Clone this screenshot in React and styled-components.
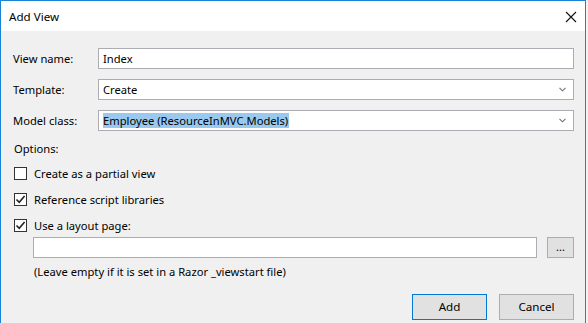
import React from "react";
import styled, { createGlobalStyle } from "styled-components";

const Global = createGlobalStyle`
  html, body { margin: 0; padding: 0; background: #f3f3f3; }
  body { font-family: "Noto Sans", "Liberation Sans", sans-serif; font-size: 11.2px; color: #000; }
  * { box-sizing: border-box; }
`;

const Window = styled.div`
  width: 586px;
  height: 323px;
  overflow: hidden;
  border: 1px solid #1883d7;
  border-bottom: none;
  background: #f0f0f0;
  display: flex;
  flex-direction: column;
`;

const TitleBar = styled.div`
  height: 30px;
  flex: none;
  background: #fff;
  display: flex;
  align-items: center;
  justify-content: space-between;
  padding: 0 9px 0 8px;
`;

const Title = styled.span`
  font-size: 11.6px;
  line-height: 16px;
  margin-top: 1px;
`;

const CloseBtn = styled.div`
  width: 12px;
  height: 12px;
  display: flex;
  margin-right: -1px;
  margin-top: 1px;
`;

const Body = styled.div`
  padding: 17px 11px 0 12px;
  display: flex;
  flex-direction: column;
`;

const FieldRow = styled.div`
  display: grid;
  grid-template-columns: 85px 476px;
  align-items: center;
  height: 21px;
  margin-bottom: 10px;
`;

const Label = styled.label`
  line-height: 16px;
`;

const TextBox = styled.div`
  height: 21px;
  background: #fff;
  border: 1px solid #abadb3;
  padding: 0 4px;
  display: flex;
  align-items: center;
  line-height: 16px;
  width: ${p => (p.$w ? p.$w + "px" : "auto")};
`;

const Combo = styled(TextBox)`
  justify-content: space-between;
  padding-right: 7px;
`;

const Selected = styled.span`
  background: #99c9ef;
  line-height: 15px;
  padding-right: 1px;
`;

const SectionLabel = styled.div`
  line-height: 16px;
  margin: 0 0 10px 1px;
`;

const CheckRow = styled.div`
  display: flex;
  align-items: center;
  gap: 7px;
  height: 13px;
  margin: 0 0 13px 1px;
`;

const Box = styled.div`
  width: 13px;
  height: 13px;
  border: 1px solid #333;
  background: #fff;
  display: flex;
  align-items: center;
  justify-content: center;
  flex: none;
`;

const CheckText = styled.span`
  line-height: 16px;
`;

const PathRow = styled.div`
  display: flex;
  gap: 10px;
  margin: -8px 0 0 20px;
  height: 21px;
`;

const SmallButton = styled.div`
  width: 27px;
  height: 21px;
  border: 1px solid #adadad;
  background: #e1e1e1;
  display: flex;
  align-items: center;
  justify-content: center;
  font-size: 11px;
  line-height: 12px;
  padding-bottom: 2px;
`;

const Hint = styled.div`
  margin: 6px 0 0 21px;
  line-height: 16px;
`;

const Footer = styled.div`
  display: flex;
  justify-content: flex-end;
  gap: 12px;
  margin-top: 14px;
`;

const Button = styled.div`
  width: 75px;
  height: 26px;
  background: #e1e1e1;
  border: 1px solid ${p => (p.$primary ? "#0078d7" : "#adadad")};
  display: flex;
  align-items: center;
  justify-content: center;
  line-height: 16px;
  font-size: 11.6px;
`;

const Chevron = () => (
  <svg width="7" height="5" viewBox="0 0 7 5">
    <path d="M0.5 0.8 L3.5 3.8 L6.5 0.8" fill="none" stroke="#707070" strokeWidth="1.1" />
  </svg>
);

const Check = () => (
  <svg width="11" height="11" viewBox="0 0 11 11">
    <path d="M1.5 5.5 L4.2 8.3 L9.6 2" fill="none" stroke="#222" strokeWidth="1.6" />
  </svg>
);

const CheckOpt = ({ checked, children }) => (
  <CheckRow>
    <Box>{checked && <Check />}</Box>
    <CheckText>{children}</CheckText>
  </CheckRow>
);

export default function App() {
  return (
    <>
      <Global />
      <Window>
        <TitleBar>
          <Title>Add View</Title>
          <CloseBtn>
            <svg width="12" height="12" viewBox="0 0 12 12">
              <path d="M1 1 L11 11 M11 1 L1 11" stroke="#111" strokeWidth="1.1" />
            </svg>
          </CloseBtn>
        </TitleBar>
        <Body>
          <FieldRow>
            <Label>View name:</Label>
            <TextBox>Index</TextBox>
          </FieldRow>
          <FieldRow>
            <Label>Template:</Label>
            <Combo>
              <span>Create</span>
              <Chevron />
            </Combo>
          </FieldRow>
          <FieldRow>
            <Label>Model class:</Label>
            <Combo>
              <Selected>Employee (ResourceInMVC.Models)</Selected>
              <Chevron />
            </Combo>
          </FieldRow>
          <SectionLabel>Options:</SectionLabel>
          <CheckOpt>Create as a partial view</CheckOpt>
          <CheckOpt checked>Reference script libraries</CheckOpt>
          <CheckOpt checked>Use a layout page:</CheckOpt>
          <PathRow>
            <TextBox $w={504} />
            <SmallButton>...</SmallButton>
          </PathRow>
          <Hint>(Leave empty if it is set in a Razor _viewstart file)</Hint>
          <Footer>
            <Button $primary>Add</Button>
            <Button>Cancel</Button>
          </Footer>
        </Body>
      </Window>
    </>
  );
}
